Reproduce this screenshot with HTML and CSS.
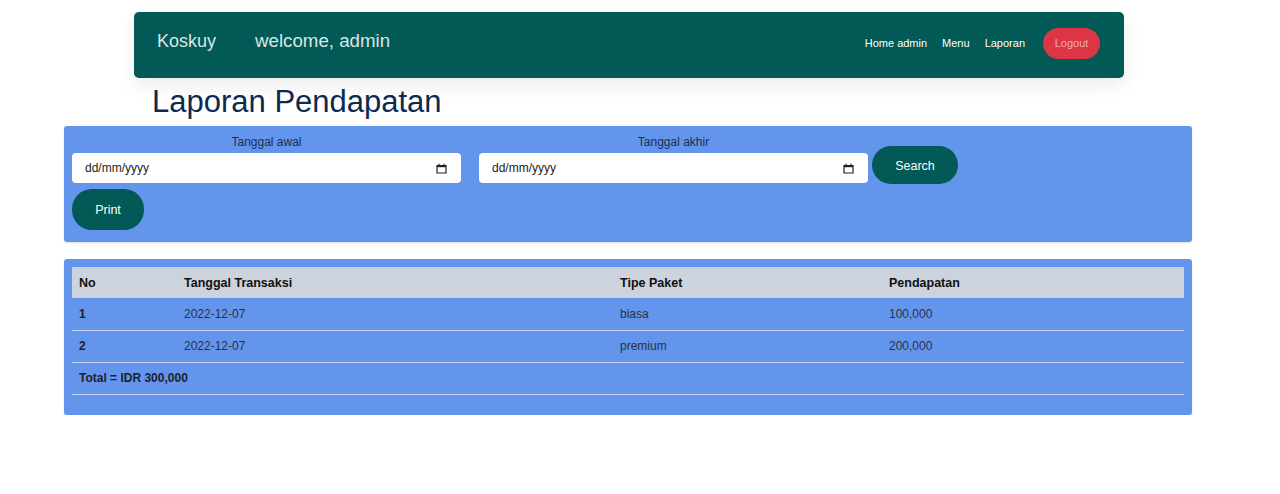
FILE: index.html
```html
<!DOCTYPE html>
<html lang="id">
<head>
<meta charset="utf-8">
<title>Laporan Pendapatan</title>
<link rel="stylesheet" href="styles.css">
</head>
<body>
<nav class="navbar">
  <div class="brand">Koskuy</div>
  <div class="welcome">welcome, admin</div>
  <div class="nav-links">
    <a class="nav-link">Home admin</a>
    <a class="nav-link">Menu</a>
    <a class="nav-link">Laporan</a>
    <button class="btn-logout">Logout</button>
  </div>
</nav>

<h1 class="title">Laporan Pendapatan</h1>

<section class="card filter-card">
  <div class="filter-row">
    <div class="field">
      <label class="field-label">Tanggal awal</label>
      <div class="date-input">
        <span>dd/mm/yyyy</span>
        <svg class="cal" width="11" height="11" viewBox="0 0 11 11"><path d="M1 2.5h9v7.5H1z" fill="none" stroke="#222" stroke-width="1.2"/><path d="M1 2h9v2.2H1z" fill="#222"/><path d="M3 0.8v1.6M8 0.8v1.6" stroke="#222" stroke-width="1.2"/></svg>
      </div>
    </div>
    <div class="field">
      <label class="field-label">Tanggal akhir</label>
      <div class="date-input">
        <span>dd/mm/yyyy</span>
        <svg class="cal" width="11" height="11" viewBox="0 0 11 11"><path d="M1 2.5h9v7.5H1z" fill="none" stroke="#222" stroke-width="1.2"/><path d="M1 2h9v2.2H1z" fill="#222"/><path d="M3 0.8v1.6M8 0.8v1.6" stroke="#222" stroke-width="1.2"/></svg>
      </div>
    </div>
    <button class="btn btn-search">Search</button>
  </div>
  <button class="btn btn-print">Print</button>
</section>

<section class="card table-card">
  <table class="report">
    <colgroup>
      <col class="c1"><col class="c2"><col class="c3"><col class="c4">
    </colgroup>
    <thead>
      <tr><th>No</th><th>Tanggal Transaksi</th><th>Tipe Paket</th><th>Pendapatan</th></tr>
    </thead>
    <tbody>
      <tr><td class="no">1</td><td>2022-12-07</td><td>biasa</td><td>100,000</td></tr>
      <tr><td class="no">2</td><td>2022-12-07</td><td>premium</td><td>200,000</td></tr>
      <tr><td class="total" colspan="4">Total = IDR 300,000</td></tr>
    </tbody>
  </table>
</section>
</body>
</html>
```

FILE: styles.css
```css
* { box-sizing: border-box; }

body {
  margin: 0;
  font-family: "Liberation Sans", Arial, sans-serif;
  background: #fff;
  color: #222;
}

.navbar {
  width: 990px;
  height: 66px;
  margin: 12px 0 0 134px;
  padding: 0 23px;
  background: #025955;
  border-radius: 5px;
  display: flex;
  align-items: center;
  box-shadow: 0 8px 18px rgba(0, 0, 0, 0.08);
}

.brand {
  font-size: 18px;
  color: #d7e8e6;
  margin-top: -8px;
}

.welcome {
  font-size: 18.7px;
  color: #d7e8e6;
  margin-left: 39px;
  margin-top: -8px;
}

.nav-links {
  margin-left: auto;
  display: flex;
  align-items: center;
  margin-top: -4px;
}

.nav-link {
  font-size: 11px;
  color: #fff;
  margin-right: 15px;
}

.nav-link:nth-child(3) { margin-right: 18px; }

.btn-logout {
  font-family: inherit;
  font-size: 11px;
  color: #f4aab1;
  background: #dc3545;
  border: none;
  border-radius: 16px;
  width: 57px;
  height: 31px;
  padding: 0;
  margin-right: 1px;
}

.title {
  margin: 6px 0 6px 152px;
  font-size: 31px;
  font-weight: normal;
  color: #0d2950;
  line-height: 36px;
}

.card {
  width: 1128px;
  margin-left: 64px;
  background: #6495ed;
  border-radius: 3px;
  box-shadow: 0 1px 2px rgba(0, 0, 0, 0.12);
}

.filter-card {
  padding: 9px 8px 12px;
}

.filter-row {
  display: flex;
  align-items: flex-end;
}

.field {
  width: 389px;
  display: flex;
  flex-direction: column;
  align-items: center;
}

.field + .field { margin-left: 18px; }

.field-label {
  font-size: 12px;
  line-height: 14px;
  color: #1e2d4e;
  margin-bottom: 4px;
}

.date-input {
  width: 100%;
  height: 30px;
  background: #fff;
  border-radius: 4px;
  display: flex;
  align-items: center;
  justify-content: space-between;
  padding: 0 14px 0 13px;
  font-size: 12px;
  color: #222;
}

.cal { display: block; }

.btn {
  font-family: inherit;
  color: #fff;
  background: #025955;
  border: none;
  border-radius: 20px;
  padding: 0;
  font-size: 12.5px;
}

.btn-search {
  width: 86px;
  height: 38px;
  margin-left: 4px;
  margin-bottom: -1px;
  padding-top: 2px;
}

.btn-print {
  width: 72px;
  height: 41px;
  margin-top: 6px;
  display: block;
}

.table-card {
  margin-top: 17px;
  padding: 8px 8px 20px;
}

.report {
  width: 1112px;
  border-collapse: collapse;
  table-layout: fixed;
  font-size: 12px;
}

.c1 { width: 105px; }
.c2 { width: 436px; }
.c3 { width: 269px; }
.c4 { width: 302px; }

.report th {
  background: #ccd3dd;
  height: 31px;
  text-align: left;
  font-weight: bold;
  font-size: 12.5px;
  color: #111;
  padding: 0 7px;
}

.report td {
  height: 32px;
  padding: 0 7px;
  color: #2b3040;
  border-bottom: 1px solid #c3d4f5;
  white-space: nowrap;
}

.report td.no,
.report td.total {
  font-weight: bold;
  color: #1b1f2a;
}
```
